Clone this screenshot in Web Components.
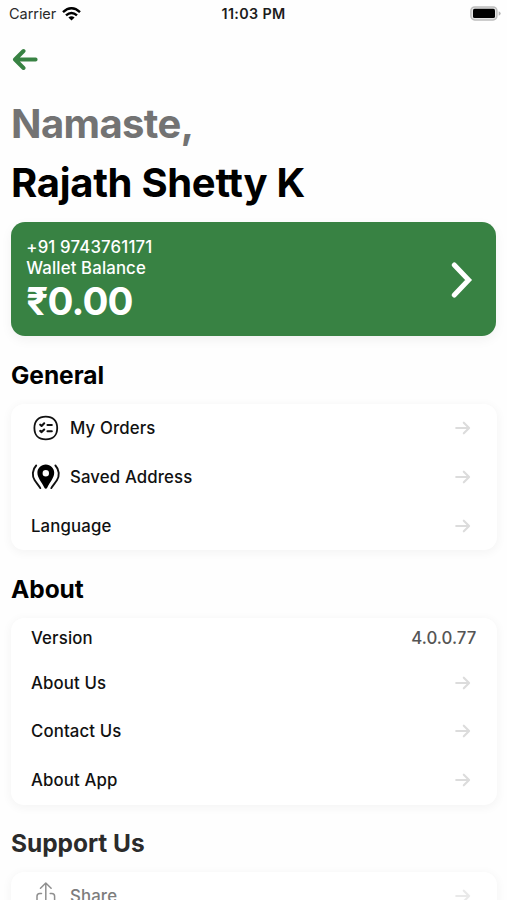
<!DOCTYPE html>
<html lang="en">
<head>
<meta charset="utf-8">
<title>Profile</title>
<style>
  html, body { margin: 0; height: 900px; overflow: hidden; background: #fefefe; }
  body { font-family: Inter, "Liberation Sans", sans-serif; color: #000; }
</style>
</head>
<body>
<profile-screen></profile-screen>
<script>
const define = (name, html) => {
  const t = document.createElement('template');
  t.innerHTML = html;
  customElements.define(name, class extends HTMLElement {
    constructor() {
      super();
      this.attachShadow({ mode: 'open' }).append(t.content.cloneNode(true));
    }
  });
};

define('status-bar', `
<style>
  :host { display: grid; grid-template-columns: 1fr auto 1fr; align-items: center; height: 27px; padding: 0 7px 0 9px; box-sizing: border-box; }
  .left { display: flex; align-items: center; gap: 6px; font-size: 14.5px; letter-spacing: -.05px; color: #2a2a2a; }
  .time { font-size: 14.3px; letter-spacing: .35px; font-weight: 600; color: #1c1c1c; margin-right: 2px; }
  .battery { justify-self: end; margin-right: -1px; }
  svg { display: block; }
</style>
<div class="left"><span>Carrier</span>
  <svg width="19" height="14" viewBox="0 0 19 14" fill="none" stroke="#000" stroke-width="2.5"><path d="M1 5.1Q9.5-2.5 18 5.1"/><path d="M4 8.4Q9.5 3.6 15 8.4"/><path d="M9.5 13.6 6.4 10.6Q9.5 8.1 12.6 10.6Z" fill="#000" stroke="none"/></svg>
</div>
<span class="time">11:03 PM</span>
<svg class="battery" width="31" height="15" viewBox="0 0 31 15"><rect x=".9" y=".9" width="26" height="13" rx="3.8" fill="#e4e4e4" stroke="#bdbdbd" stroke-width="1.5"/><rect x="3" y="2.8" width="22" height="9.2" rx="1.6"/><path d="M28.7 5.2q2 .7 2 2.3t-2 2.3z" fill="#b5b5b5"/></svg>`);

define('back-button', `
<style>:host { display: flex; align-items: center; height: 64px; padding-left: 12px; } svg { display: block; }</style>
<svg width="26" height="22" viewBox="0 0 26 22" fill="none" stroke="#388243" stroke-width="4" stroke-linecap="round" stroke-linejoin="round"><path d="M23.6 11.5H3.4M11.5 3 3 11.5l8.5 8.5"/></svg>`);

define('greeting-title', `
<style>
  :host { display: block; padding: 4px 0 0 11px; font-size: 40px; font-weight: 700; line-height: 58.5px; }
  div { white-space: nowrap; }
  .hello { color: #737373; letter-spacing: -.6px; }
  .name { letter-spacing: -.3px; }
</style>
<div class="hello"><slot name="hello"></slot></div><div class="name"><slot></slot></div>`);

define('wallet-card', `
<style>
  :host { display: flex; align-items: center; justify-content: space-between; box-sizing: border-box; height: 114.5px; margin: 9.8px 10.7px 0 11.3px; padding: 1px 23px 0 15px; border-radius: 14px; background: #388243; color: #fff; box-shadow: 0 4px 12px rgba(0,0,0,.05); }
  .small { font-size: 16.8px; font-weight: 500; line-height: 21px; }
  .phone { letter-spacing: .15px; }
  .label { letter-spacing: .12px; }
  .amount { font-size: 38.5px; font-weight: 700; line-height: 44px; letter-spacing: -.8px; }
  svg { display: block; }
</style>
<div><div class="small phone"><slot name="phone"></slot></div><div class="small label"><slot name="label"></slot></div><div class="amount"><slot></slot></div></div>
<svg width="22" height="36" viewBox="0 0 22 36" fill="none" stroke="#fff" stroke-width="5" stroke-linecap="round" stroke-linejoin="miter"><path d="M3.3 3 17.6 18 3.3 33"/></svg>`);

define('menu-section', `
<style>
  :host { display: block; }
  h2 { margin: 0; padding-left: 11px; font-size: 24.5px; font-weight: 700; line-height: 30px; letter-spacing: -.05px; }
  .card { margin: 14px 10.5px 0 11px; border-radius: 13px; background: #fff; box-shadow: 0 2px 9px 2px rgba(0,0,0,.035); }
</style>
<h2><slot name="title"></slot></h2><div class="card"><slot></slot></div>`);

define('menu-row', `
<style>
  :host { display: flex; align-items: center; height: 48.8px; padding: 0 20px; font-size: 16.8px; letter-spacing: .13px; font-weight: 500; color: #111; }
  :host([plain]) { height: 40.5px; }
  .label { flex: 1; }
  ::slotted(svg) { display: block; width: 30px; height: 30px; margin-right: 9px; }
  ::slotted([slot=value]) { color: #555; letter-spacing: .07px; }
  .arrow { display: block; margin-right: 6px; }
  :host([plain]) .arrow { display: none; }
  :host([faded]) .arrow { opacity: .6; }
</style>
<slot name="icon"></slot><span class="label"><slot></slot></span><slot name="value"></slot>
<svg class="arrow" width="16" height="14" viewBox="0 0 16 14" fill="none" stroke="#dcdcdc" stroke-width="2.1" stroke-linecap="round" stroke-linejoin="round"><path d="M1.2 7H14M8.8 1.7 14.1 7 8.8 12.3"/></svg>`);

define('profile-screen', `
<style>
  :host { display: block; height: 900px; overflow: hidden; }
  .general { margin-top: 23.7px; }
  .about, .support { margin-top: 23.4px; }
  .support [slot=title] { color: #2b2b2b; }
  .support menu-row { color: #7d7d7d; }
  .support svg { opacity: .5; }
</style>
<status-bar></status-bar>
<back-button></back-button>
<greeting-title><span slot="hello">Namaste,</span>Rajath Shetty K</greeting-title>
<wallet-card><span slot="phone">+91 9743761171</span><span slot="label">Wallet Balance</span>₹0.00</wallet-card>
<menu-section class="general"><span slot="title">General</span>
  <menu-row><svg slot="icon" viewBox="0 0 30 30" fill="none" stroke="#111" stroke-width="1.8" stroke-linecap="round" stroke-linejoin="round"><path d="M14.8 3.6C22 3.6 26.2 7.8 26.2 15S22 26.4 14.8 26.400 3.400 22.200 3.400 15 7.600 3.600 14.800 3.600Z"/><path stroke-width="2.1" d="m9.200 11.700 1.400 1.200 2.600-2.600M9.200 17.900l1.400 1.200 2.600-2.600M16.500 12h4.300M16.500 18.200h4.300"/></svg>My Orders</menu-row>
  <menu-row><svg slot="icon" viewBox="0 0 30 30"><path fill-rule="evenodd" d="M14.8 2.500C10 2.500 6.400 6.200 6.400 10.800c0 5.200 4.500 9.600 7 15 .6 1.200 2.200 1.200 2.800 0 2.500-5.400 7-9.800 7-15C23.200 6.200 19.600 2.500 14.800 2.500Zm0 5.500a3.200 3.200 0 1 1 0 6.400 3.200 3.200 0 0 1 0-6.400Z"/><path fill="none" stroke="#111" stroke-width="1.9" stroke-linecap="round" d="M5.200 3.500C1 7.800 1 14 3.700 18.200c1.900 3 3.900 4.900 5.600 7.900M24.400 3.500c4.200 4.300 4.200 10.500 1.500 14.700-1.900 3-3.900 4.900-5.600 7.900"/></svg>Saved Address</menu-row>
  <menu-row>Language</menu-row>
</menu-section>
<menu-section class="about"><span slot="title">About</span>
  <menu-row plain>Version<span slot="value">4.0.0.77</span></menu-row>
  <menu-row>About Us</menu-row>
  <menu-row>Contact Us</menu-row>
  <menu-row>About App</menu-row>
</menu-section>
<menu-section class="support"><span slot="title">Support Us</span>
  <menu-row faded><svg slot="icon" viewBox="0 0 30 30" fill="none" stroke="#222" stroke-width="1.5" stroke-linecap="round" stroke-linejoin="round"><path d="M14.800 20V2.200M9.500 7.200l5.300-5.200 5.300 5.200M10.500 12.500H8.800Q6 12.500 6 15.300V25Q6 27.500 8.800 27.500H20.800Q23.600 27.500 23.600 25V15.300Q23.600 12.500 20.800 12.500H19.200"/></svg>Share</menu-row>
</menu-section>`);
</script>
</body>
</html>
